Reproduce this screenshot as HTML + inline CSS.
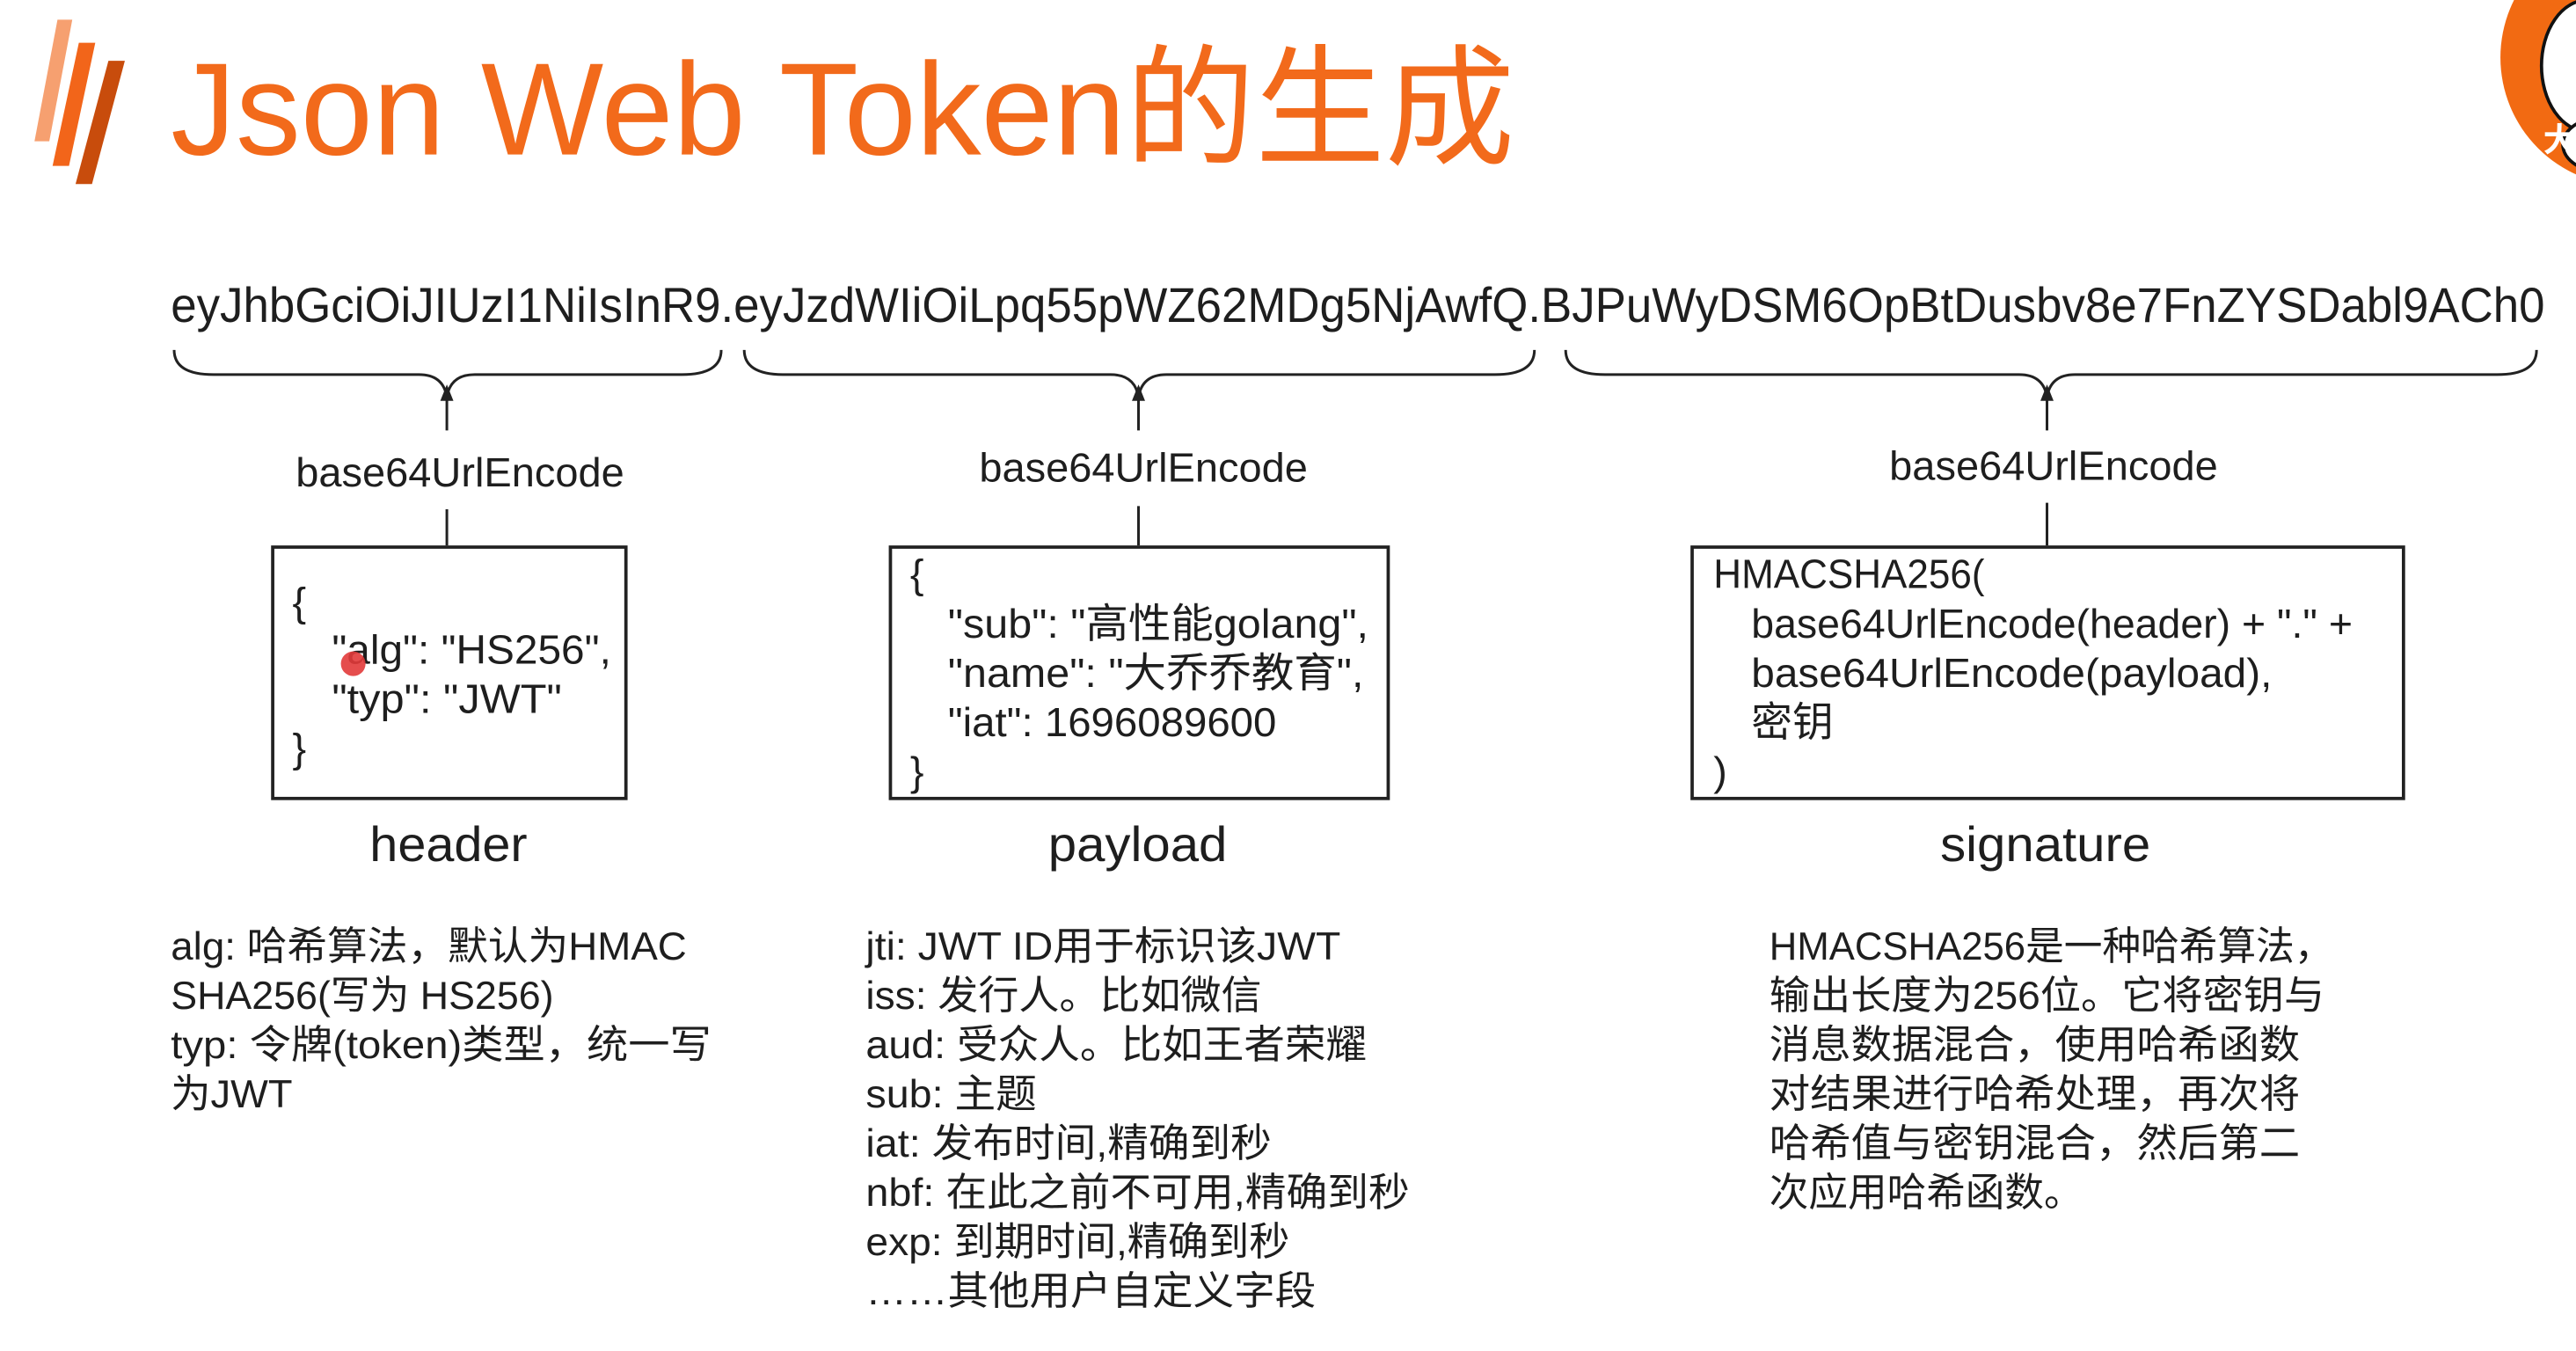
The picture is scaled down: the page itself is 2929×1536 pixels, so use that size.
<!DOCTYPE html>
<html><head><meta charset="utf-8"><style>
html,body{margin:0;padding:0;background:#fff;width:2929px;height:1536px;overflow:hidden}
svg{display:block}
text{font-family:"Liberation Sans","Noto Sans CJK SC",sans-serif;fill:#1e1e1e}
</style></head><body>
<svg width="2929" height="1536" viewBox="0 0 1568 822.3" preserveAspectRatio="none">
<!-- stripes -->
<polygon points="35,12 44,12 30,86 21,86" fill="#f6a070"/>
<polygon points="48,26 58,26 42,101 32,101" fill="#f2651a"/>
<polygon points="66,37 76,37 56,112 46,112" fill="#c84c0c"/>
<!-- title -->
<text x="104" y="94" font-size="80" textLength="818" lengthAdjust="spacingAndGlyphs" style="fill:#f26a1b">Json Web Token的生成</text>
<!-- logo circle -->
<circle cx="1600" cy="35" r="78" fill="#f26a12"/>
<ellipse cx="1575" cy="40" rx="28" ry="40" fill="#fff" stroke="#111" stroke-width="2"/>
<ellipse cx="1582" cy="88" rx="22" ry="16" fill="#fff" stroke="#111" stroke-width="2"/>
<text x="1548" y="92" font-size="20" font-weight="bold" style="fill:#fff">大</text>
<!-- token -->
<text x="104" y="196" font-size="30" textLength="1445" lengthAdjust="spacingAndGlyphs">eyJhbGciOiJIUzI1NiIsInR9.eyJzdWIiOiLpq55pWZ62MDg5NjAwfQ.BJPuWyDSM6OpBtDusbv8e7FnZYSDabl9ACh0</text>
<!-- braces -->
<g fill="none" stroke="#222" stroke-width="1.6">
<path d="M106,213 Q106,228 130,228 L255,228 Q270,228 272,242 Q274,228 289,228 L415,228 Q439,228 439,213"/>
<path d="M453,213 Q453,228 477,228 L676,228 Q691,228 693,242 Q695,228 710,228 L910,228 Q934,228 934,213"/>
<path d="M953,213 Q953,228 977,228 L1229,228 Q1244,228 1246,242 Q1248,228 1263,228 L1520,228 Q1544,228 1544,213"/>
<path d="M272,240 V262 M693,240 V262 M1246,240 V262 M272,310 V332 M693,308 V332 M1246,306 V332"/>
</g>
<g fill="#222"><polygon points="272,234 268,244 276,244"/><polygon points="693,234 689,244 697,244"/><polygon points="1246,234 1242,244 1250,244"/></g>
<text x="180" y="296" font-size="25" textLength="200" lengthAdjust="spacingAndGlyphs">base64UrlEncode</text>
<text x="596" y="293" font-size="25" textLength="200" lengthAdjust="spacingAndGlyphs">base64UrlEncode</text>
<text x="1150" y="292" font-size="25" textLength="200" lengthAdjust="spacingAndGlyphs">base64UrlEncode</text>
<!-- boxes -->
<g fill="none" stroke="#222" stroke-width="2">
<rect x="166" y="333" width="215" height="153"/>
<rect x="542" y="333" width="303" height="153"/>
<rect x="1030" y="333" width="433" height="153"/>
</g>
<g font-size="25">
<text x="178" y="375">{</text>
<text x="202" y="404" textLength="170" lengthAdjust="spacingAndGlyphs">"alg": "HS256",</text>
<text x="202" y="434" textLength="140" lengthAdjust="spacingAndGlyphs">"typ": "JWT"</text>
<text x="178" y="464">}</text>
<text x="554" y="358">{</text>
<text x="577" y="388" textLength="256" lengthAdjust="spacingAndGlyphs">"sub": "高性能golang",</text>
<text x="577" y="418" textLength="253" lengthAdjust="spacingAndGlyphs">"name": "大乔乔教育",</text>
<text x="577" y="448" textLength="200" lengthAdjust="spacingAndGlyphs">"iat": 1696089600</text>
<text x="554" y="478">}</text>
<text x="1043" y="358" textLength="165" lengthAdjust="spacingAndGlyphs">HMACSHA256(</text>
<text x="1066" y="388" textLength="366" lengthAdjust="spacingAndGlyphs">base64UrlEncode(header) + "." +</text>
<text x="1066" y="418" textLength="317" lengthAdjust="spacingAndGlyphs">base64UrlEncode(payload),</text>
<text x="1066" y="448">密钥</text>
<text x="1043" y="478">)</text>
</g>
<circle cx="215" cy="404" r="7.5" fill="#e23a3a" opacity="0.9"/>
<g font-size="30">
<text x="225" y="524" textLength="96" lengthAdjust="spacingAndGlyphs">header</text>
<text x="638" y="524" textLength="109" lengthAdjust="spacingAndGlyphs">payload</text>
<text x="1181" y="524" textLength="128" lengthAdjust="spacingAndGlyphs">signature</text>
</g>
<g font-size="24">
<text x="104" y="584" textLength="314" lengthAdjust="spacingAndGlyphs">alg: 哈希算法，默认为HMAC</text>
<text x="104" y="614" textLength="233" lengthAdjust="spacingAndGlyphs">SHA256(写为 HS256)</text>
<text x="104" y="644" textLength="329" lengthAdjust="spacingAndGlyphs">typ: 令牌(token)类型，统一写</text>
<text x="104" y="674" textLength="74" lengthAdjust="spacingAndGlyphs">为JWT</text>

<text x="527" y="584" textLength="289" lengthAdjust="spacingAndGlyphs">jti: JWT ID用于标识该JWT</text>
<text x="527" y="614" textLength="241" lengthAdjust="spacingAndGlyphs">iss: 发行人。比如微信</text>
<text x="527" y="644" textLength="305" lengthAdjust="spacingAndGlyphs">aud: 受众人。比如王者荣耀</text>
<text x="527" y="674" textLength="104" lengthAdjust="spacingAndGlyphs">sub: 主题</text>
<text x="527" y="704" textLength="247" lengthAdjust="spacingAndGlyphs">iat: 发布时间,精确到秒</text>
<text x="527" y="734" textLength="331" lengthAdjust="spacingAndGlyphs">nbf: 在此之前不可用,精确到秒</text>
<text x="527" y="764" textLength="258" lengthAdjust="spacingAndGlyphs">exp: 到期时间,精确到秒</text>
<text x="527" y="794" textLength="274" lengthAdjust="spacingAndGlyphs">……其他用户自定义字段</text>

<text x="1077" y="584" textLength="343" lengthAdjust="spacingAndGlyphs">HMACSHA256是一种哈希算法，</text>
<text x="1077" y="614" textLength="338" lengthAdjust="spacingAndGlyphs">输出长度为256位。它将密钥与</text>
<text x="1077" y="644" textLength="323" lengthAdjust="spacingAndGlyphs">消息数据混合，使用哈希函数</text>
<text x="1077" y="674" textLength="323" lengthAdjust="spacingAndGlyphs">对结果进行哈希处理，再次将</text>
<text x="1077" y="704" textLength="323" lengthAdjust="spacingAndGlyphs">哈希值与密钥混合，然后第二</text>
<text x="1077" y="734" textLength="191" lengthAdjust="spacingAndGlyphs">次应用哈希函数。</text>
</g>
</svg>
</body></html>
